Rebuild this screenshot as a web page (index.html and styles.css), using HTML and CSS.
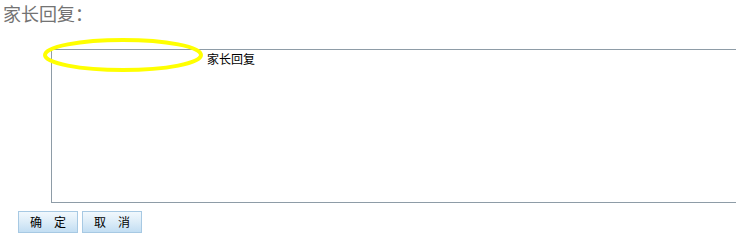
FILE: index.html
```html
<!DOCTYPE html>
<html lang="zh">
<head>
<meta charset="utf-8">
<title>家长回复</title>
<link rel="stylesheet" href="styles.css">
</head>
<body>
<div class="page">
  <div class="title">家长回复：</div>
  <div class="editor-wrap">
    <div class="editor">
      <span class="editor-text">家长回复</span>
    </div>
    <svg class="mark" width="164" height="38" viewBox="0 0 164 38" aria-hidden="true">
      <ellipse cx="82" cy="19" rx="78" ry="15" fill="none" stroke="#ffff00" stroke-width="4"/>
    </svg>
  </div>
  <div class="actions">
    <button class="btn" type="button">确　定</button>
    <button class="btn" type="button">取　消</button>
  </div>
</div>
</body>
</html>
```
FILE: styles.css
```css
html, body {
  margin: 0;
  padding: 0;
  background: #ffffff;
}
body {
  font-family: "Noto Sans CJK SC", "Liberation Sans", sans-serif;
  width: 736px;
  height: 250px;
  overflow: hidden;
}
.page {
  display: flex;
  flex-direction: column;
}
.title {
  font-size: 18px;
  line-height: 26px;
  color: #737373;
  padding-left: 3px;
  height: 26px;
}
.editor-wrap {
  position: relative;
  margin-top: 23px;
  margin-left: 51px;
}
.editor {
  box-sizing: border-box;
  width: 720px;
  height: 154px;
  border: 1px solid #8e9ca7;
  border-right: none;
  padding: 0 0 0 155px;
  font-size: 12px;
  line-height: 17px;
  color: #000;
}
.editor-text {
  display: inline-block;
}
.mark {
  position: absolute;
  left: -10px;
  top: -13px;
}
.actions {
  display: flex;
  gap: 4px;
  margin-top: 8px;
  margin-left: 18px;
}
.btn {
  box-sizing: border-box;
  width: 60px;
  height: 22px;
  padding: 0;
  border: 1px solid #a7c9e3;
  background: linear-gradient(to bottom, #f1f8fd 0%, #dcecf8 50%, #c3def3 100%);
  font-family: "Noto Sans CJK SC", sans-serif;
  font-size: 12px;
  line-height: 20px;
  color: #000;
  cursor: pointer;
}
```
